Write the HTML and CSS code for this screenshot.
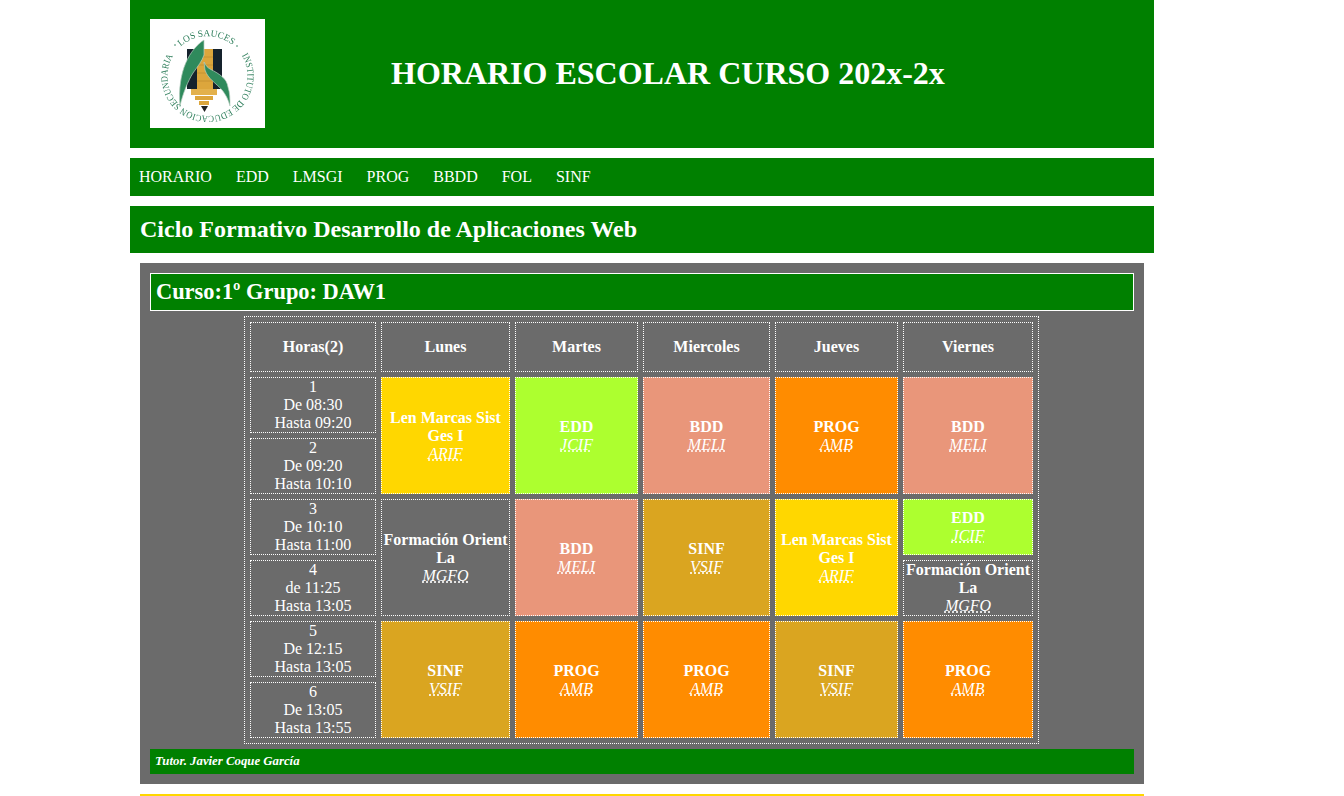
FILE: index.html
```html
<!DOCTYPE html>
<html lang="es">
<head>
<meta charset="utf-8">
<title>Horario escolar</title>
<link rel="stylesheet" href="styles.css">
</head>
<body>
<div class="page">
  <header class="header">
    <svg class="logo" width="115" height="109" viewBox="0 0 115 109" role="img" aria-label="Logo IES Los Sauces">
      <rect width="115" height="109" fill="#fff"/>
      <defs>
        <path id="arcTop" d="M30.700 27.500 A40 40 0 0 1 84.300 27.500"/>
        <path id="arcRing" d="M91.800 36.400 A40 40 0 1 1 23.200 36.400"/>
      </defs>
      <g class="logo-art">
        <rect x="37" y="30" width="35" height="40" fill="#15222c"/>
        <rect x="47" y="30" width="16" height="40" fill="#dca63c"/>
        <path d="M47 38h16M47 46h16M47 54h16M47 62h16" stroke="#c08f30" stroke-width=".8"/>
        <rect x="41" y="70" width="26" height="6" fill="#e3b14c"/>
        <rect x="45" y="77" width="18" height="4" fill="#dca63c"/>
        <rect x="49" y="82" width="10" height="4" fill="#dca63c"/>
        <path d="M51 87h7l-3.500 6z" fill="#222"/>
        <path d="M54 21C40 30 27 52 30 87C33 74 38 62 43 54C48 47 52 42 54 36Z" fill="#2f8a5c" stroke="#b9cfc2" stroke-width=".7"/>
        <path d="M54 43C56 47 58 49 60 50C70 55 77 60 78 68C80 74 80 80 80 87C78 80 76 76 72 71C66 64 58 60 55 51Z" fill="#2f8a5c" stroke="#b9cfc2" stroke-width=".7"/>
        <text class="logo-text"><textPath href="#arcTop" textLength="56" lengthAdjust="spacingAndGlyphs">LOS SAUCES</textPath></text>
        <text class="logo-text"><textPath href="#arcRing" textLength="168" lengthAdjust="spacingAndGlyphs">INSTITUTO DE EDUCACION SECUNDARIA</textPath></text>
        <circle cx="25" cy="26" r=".8" fill="#2f7f5c"/>
        <circle cx="87" cy="27" r=".8" fill="#2f7f5c"/>
      </g>
    </svg>
    <h1 class="title">HORARIO ESCOLAR CURSO 202x-2x</h1>
  </header>

  <nav class="nav">
    <a href="#">HORARIO</a>
    <a href="#">EDD</a>
    <a href="#">LMSGI</a>
    <a href="#">PROG</a>
    <a href="#">BBDD</a>
    <a href="#">FOL</a>
    <a href="#">SINF</a>
  </nav>

  <h2 class="cycle">Ciclo Formativo Desarrollo de Aplicaciones Web</h2>

  <main class="panel">
    <h2 class="group">Curso:1º Grupo: DAW1</h2>
    <table class="schedule">
      <colgroup>
        <col class="c-hours"><col class="c-mon"><col class="c-tue"><col class="c-wed"><col class="c-thu"><col class="c-fri">
      </colgroup>
      <thead>
        <tr class="head-row"><th>Horas(2)</th><th>Lunes</th><th>Martes</th><th>Miercoles</th><th>Jueves</th><th>Viernes</th></tr>
      </thead>
      <tbody>
        <tr>
          <td>1<br>De 08:30<br>Hasta 09:20</td>
          <td rowspan="2" class="lm"><b>Len Marcas Sist Ges I</b><br><abbr title="ARIF">ARIF</abbr></td>
          <td rowspan="2" class="edd"><b>EDD</b><br><abbr title="JCIF">JCIF</abbr></td>
          <td rowspan="2" class="bdd"><b>BDD</b><br><abbr title="MELI">MELI</abbr></td>
          <td rowspan="2" class="prog"><b>PROG</b><br><abbr title="AMB">AMB</abbr></td>
          <td rowspan="2" class="bdd"><b>BDD</b><br><abbr title="MELI">MELI</abbr></td>
        </tr>
        <tr><td>2<br>De 09:20<br>Hasta 10:10</td></tr>
        <tr>
          <td>3<br>De 10:10<br>Hasta 11:00</td>
          <td rowspan="2"><b>Formación Orient La</b><br><abbr title="MGFO">MGFO</abbr></td>
          <td rowspan="2" class="bdd"><b>BDD</b><br><abbr title="MELI">MELI</abbr></td>
          <td rowspan="2" class="sinf"><b>SINF</b><br><abbr title="VSIF">VSIF</abbr></td>
          <td rowspan="2" class="lm"><b>Len Marcas Sist Ges I</b><br><abbr title="ARIF">ARIF</abbr></td>
          <td class="edd"><b>EDD</b><br><abbr title="JCIF">JCIF</abbr></td>
        </tr>
        <tr>
          <td>4<br>de 11:25<br>Hasta 13:05</td>
          <td><b>Formación Orient La</b><br><abbr title="MGFO">MGFO</abbr></td>
        </tr>
        <tr>
          <td>5<br>De 12:15<br>Hasta 13:05</td>
          <td rowspan="2" class="sinf"><b>SINF</b><br><abbr title="VSIF">VSIF</abbr></td>
          <td rowspan="2" class="prog"><b>PROG</b><br><abbr title="AMB">AMB</abbr></td>
          <td rowspan="2" class="prog"><b>PROG</b><br><abbr title="AMB">AMB</abbr></td>
          <td rowspan="2" class="sinf"><b>SINF</b><br><abbr title="VSIF">VSIF</abbr></td>
          <td rowspan="2" class="prog"><b>PROG</b><br><abbr title="AMB">AMB</abbr></td>
        </tr>
        <tr><td>6<br>De 13:05<br>Hasta 13:55</td></tr>
      </tbody>
    </table>
    <p class="tutor">Tutor. Javier Coque García</p>
  </main>
  <hr class="rule">
</div>
</body>
</html>
```
FILE: styles.css
```css
* { box-sizing: border-box; }
html, body { margin: 0; padding: 0; background: #fff; }
body { font-family: "Liberation Serif", "Times New Roman", serif; font-size: 16px; color: #fff; }

.page { width: 1024px; margin-left: 130px; }

.header {
  height: 148px;
  background: #008000;
  display: flex;
  align-items: flex-start;
  padding: 19px 0 0 20px;
}
.logo { display: block; flex: none; }
.logo-art { filter: blur(.3px); }
.logo-text { font-family: "Liberation Serif", serif; font-size: 9.500px; fill: #2f7f5c; }
.title {
  margin: 36px 0 0 126px;
  font-size: 32px;
  font-weight: bold;
  line-height: 37px;
  white-space: nowrap;
}

.nav {
  margin-top: 10px;
  height: 38px;
  background: #008000;
  display: flex;
  align-items: center;
  gap: 24px;
  padding-left: 9px;
}
.nav a { color: #fff; text-decoration: none; }

.cycle {
  margin: 10px 0;
  height: 47px;
  background: #008000;
  padding-left: 10px;
  font-size: 24px;
  line-height: 47px;
}

.panel {
  margin: 0 10px;
  height: 521px;
  background: #6b6b6b;
  padding: 10px;
}
.group {
  margin: 0;
  height: 38px;
  background: #008000;
  border: 1px solid #fff;
  padding-left: 5px;
  font-size: 22.400px;
  line-height: 35px;
}

.schedule {
  width: 795px;
  margin: 5px 0 5px 94px;
  table-layout: fixed;
  border-collapse: separate;
  border-spacing: 5px;
  border: 1px dotted #fff;
  text-align: center;
}
.c-hours { width: 126px; }
.c-mon { width: 129px; }
.c-tue { width: 123px; }
.c-wed { width: 127px; }
.c-thu { width: 123px; }
.c-fri { width: 130px; }

.schedule th, .schedule td {
  border: 1px dotted #fff;
  padding: 0;
  height: 56px;
  line-height: 18px;
}
.schedule .head-row th { height: 50px; }
.schedule b, .schedule th { font-weight: bold; }
.schedule abbr { font-style: italic; text-decoration: underline dotted; }

.lm { background: #ffd700; }
.edd { background: #adff2f; }
.bdd { background: #e9967a; }
.prog { background: #ff8c00; }
.sinf { background: #daa520; }

.tutor {
  margin: 0;
  height: 25px;
  background: #008000;
  padding-left: 5px;
  font-size: 12.800px;
  font-weight: bold;
  font-style: italic;
  line-height: 25px;
}

.rule {
  margin: 10px 10px 0;
  height: 2px;
  border: 0;
  background: #ffd700;
}
```
